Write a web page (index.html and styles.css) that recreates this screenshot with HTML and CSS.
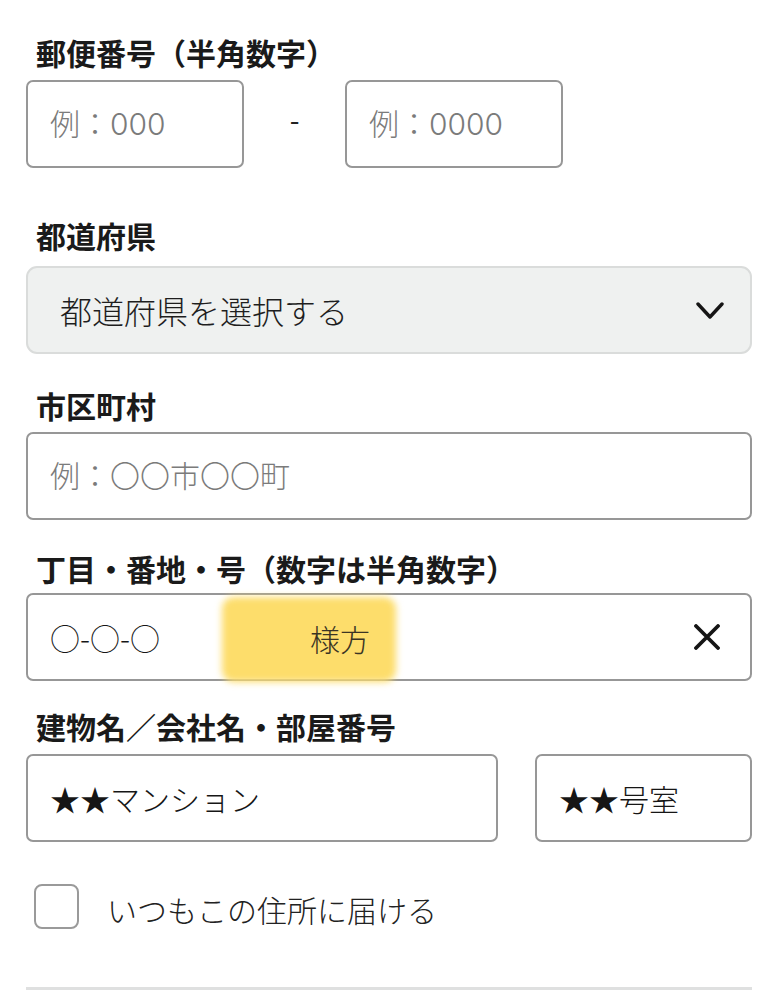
FILE: index.html
```html
<!DOCTYPE html>
<html lang="ja">
<head>
<meta charset="utf-8">
<title>住所入力</title>
<link rel="stylesheet" href="styles.css">
</head>
<body>
<form class="form">
  <section class="group group-postal">
    <div class="label">郵便番号（半角数字）</div>
    <div class="postal-row">
      <div class="field field-postal"><span class="placeholder">例：000</span></div>
      <span class="postal-dash">-</span>
      <div class="field field-postal"><span class="placeholder">例：0000</span></div>
    </div>
  </section>

  <section class="group group-pref">
    <div class="label">都道府県</div>
    <div class="select">
      <span class="select-text">都道府県を選択する</span>
      <svg class="chevron" width="28" height="18" viewBox="0 0 28 18"><path d="M2 2 L14 15 L26 2" fill="none" stroke="#151515" stroke-width="3.4" stroke-linecap="round" stroke-linejoin="round"/></svg>
    </div>
  </section>

  <section class="group group-city">
    <div class="label">市区町村</div>
    <div class="field"><span class="placeholder">例：〇〇市〇〇町</span></div>
  </section>

  <section class="group group-street">
    <div class="label">丁目・番地・号（数字は半角数字）</div>
    <div class="field field-street">
      <span class="value">○-○-○</span>
      <div class="marker"><span class="marker-text">様方</span></div>
      <svg class="clear" width="26" height="26" viewBox="0 0 26 26"><path d="M2 2 L24 24 M24 2 L2 24" fill="none" stroke="#151515" stroke-width="3.8" stroke-linecap="round"/></svg>
    </div>
  </section>

  <section class="group group-building">
    <div class="label">建物名／会社名・部屋番号</div>
    <div class="building-row">
      <div class="field field-building"><span class="value">★★マンション</span></div>
      <div class="field field-room"><span class="value">★★号室</span></div>
    </div>
  </section>

  <label class="check-row">
    <span class="checkbox"></span>
    <span class="check-text">いつもこの住所に届ける</span>
  </label>

  <hr class="divider">
</form>
</body>
</html>
```

FILE: styles.css
```css
html, body {
  margin: 0;
  padding: 0;
  background: #ffffff;
}

body {
  font-family: "Noto Sans CJK JP", "Noto Sans", sans-serif;
  color: #1a1a1a;
}

.form {
  width: 726px;
  padding: 37px 0 0 26px;
  display: flex;
  flex-direction: column;
}

.group {
  display: flex;
  flex-direction: column;
}

.label {
  font-size: 30px;
  line-height: 30px;
  font-weight: 700;
  color: #1a1a1a;
  padding-left: 10px;
}

.group-postal .label { margin-bottom: 13px; }
.group-pref { margin-top: 52px; }
.group-pref .label { margin-bottom: 16px; }
.group-city { margin-top: 36px; }
.group-city .label { margin-bottom: 12px; }
.group-street { margin-top: 33px; }
.group-street .label { margin-bottom: 10px; }
.group-building { margin-top: 30px; }
.group-building .label { margin-bottom: 13px; }

.field {
  box-sizing: border-box;
  height: 88px;
  border: 2px solid #979797;
  border-radius: 7px;
  display: flex;
  align-items: center;
  padding: 0 22px;
  font-size: 30px;
  line-height: 30px;
  font-weight: 300;
  background: #fff;
}

.placeholder {
  font-family: "Inter", "Noto Sans CJK JP", sans-serif;
  color: #7b7b7b;
}

.value {
  color: #161616;
}

.postal-row {
  display: flex;
  align-items: center;
}

.field-postal {
  width: 218px;
}

.postal-dash {
  width: 101px;
  text-align: center;
  font-size: 28px;
  line-height: 30px;
  color: #222;
  margin-top: -10px;
}

.select {
  box-sizing: border-box;
  height: 88px;
  border: 2px solid #dadcdb;
  border-radius: 11px;
  background: #eff1f0;
  display: flex;
  align-items: center;
  justify-content: space-between;
  padding: 0 26px 0 32px;
}

.select-text {
  font-size: 32px;
  line-height: 30px;
  font-weight: 300;
  color: #1e1e1e;
}

.chevron {
  display: block;
  margin-top: 1px;
}

.field-street {
  position: relative;
  justify-content: space-between;
  padding-right: 30px;
}

.marker {
  position: absolute;
  left: 192px;
  top: 0;
  width: 178px;
  height: 86px;
  display: flex;
  align-items: center;
  padding-left: 90px;
  box-sizing: border-box;
}

.marker::before {
  content: "";
  position: absolute;
  inset: 2px 2px -1px 2px;
  background: #fddd6b;
  border-radius: 12px;
  filter: blur(3.5px);
}

.marker-text {
  position: relative;
  color: #3a3424;
  font-size: 30px;
}

.clear {
  display: block;
}

.building-row {
  display: flex;
  justify-content: space-between;
}

.field-building {
  width: 472px;
}

.field-room {
  width: 217px;
}

.check-row {
  display: flex;
  align-items: center;
  margin-top: 42px;
  padding-left: 8px;
}

.checkbox {
  box-sizing: border-box;
  width: 45px;
  height: 45px;
  border: 2px solid #9a9a9a;
  border-radius: 8px;
  background: #fff;
}

.check-text {
  margin-left: 28px;
  font-size: 30px;
  line-height: 30px;
  font-weight: 300;
  color: #222;
  margin-top: 4px;
}

.divider {
  margin: 58px 0 0 0;
  border: 0;
  height: 3px;
  background: #dfe0e0;
}
```
